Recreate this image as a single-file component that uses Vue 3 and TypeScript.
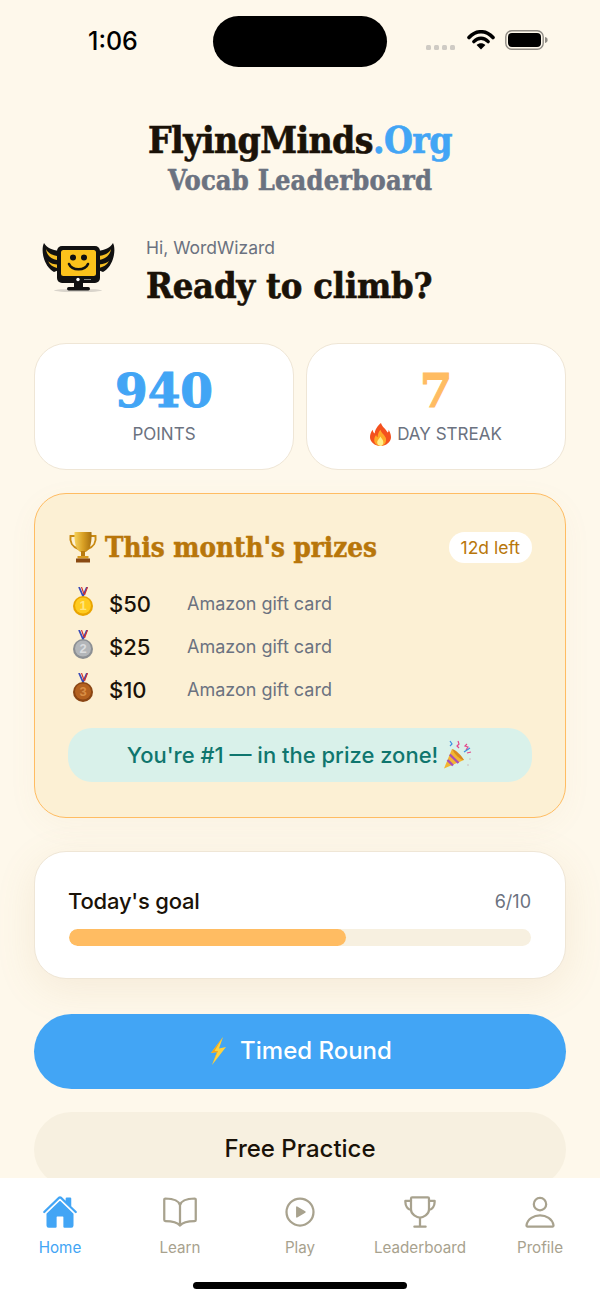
<script setup lang="ts">
interface Prize { amount: string; note: string; place: string; rim: string; face: string; ink: string }
const prizes: Prize[] = [
  { amount: '$50', note: 'Amazon gift card', place: '1', rim: '#E9A400', face: '#FFCB1F', ink: '#FFE681' },
  { amount: '$25', note: 'Amazon gift card', place: '2', rim: '#8C8F93', face: '#B3B6B9', ink: '#DADCDE' },
  { amount: '$10', note: 'Amazon gift card', place: '3', rim: '#8A4513', face: '#B4611F', ink: '#D98E45' }
]
const tabs = ['Home', 'Learn', 'Play', 'Leaderboard', 'Profile']
const goalDone = 6
const goalTotal = 10
const progress = `${(goalDone / goalTotal) * 100}%`
</script>

<template>
  <div class="phone">
    <header class="status">
      <span class="time">1:06</span>
      <span class="island"></span>
      <span class="status-right">
        <span class="dots"><i></i><i></i><i></i><i></i></span>
        <svg class="wifi" width="28" height="20" viewBox="0 0 28 20">
          <path d="M2 7.500C9-.2 19-.2 26 7.500" fill="none" stroke="#000" stroke-width="3.600" stroke-linecap="round" />
          <path d="M6.800 11.600c4.200-4.400 10.200-4.400 14.400 0" fill="none" stroke="#000" stroke-width="3.400" stroke-linecap="round" />
          <path d="M14 19.500l-4.400-4.600c2.500-2.300 6.300-2.300 8.800 0z" fill="#000" />
        </svg>
        <svg class="battery" width="43" height="20" viewBox="0 0 43 20">
          <rect x="0.800" y="0.800" width="37.400" height="18.400" rx="6" fill="none" stroke="#8f8b84" stroke-width="1.400" />
          <rect x="3" y="3" width="33" height="14" rx="4" fill="#000" />
          <path d="M40 7c2 .4 2.600 1.600 2.600 3s-.6 2.600-2.600 3z" fill="#8f8b84" />
        </svg>
      </span>
    </header>

    <main class="content">
      <section class="brand">
        <h1 class="brand-name">FlyingMinds<span class="accent">.Org</span></h1>
        <p class="brand-sub">Vocab Leaderboard</p>
      </section>

      <section class="greeting">
        <svg class="mascot" width="76" height="54" viewBox="10 10 76 54">
          <ellipse cx="48" cy="58.500" rx="24" ry="1.600" fill="#d9d4cb" />
          <path d="M14 11c-1.500 3-2 8-.5 14 1.500 6 5 12 10.500 15l5-2V19c-7-1-12-3-15-8z" fill="#111" />
          <path d="M83 11c1.500 3 2 8 .5 14-1.500 6-5 12-10.500 15l-5-2V19c7-1 12-3 15-8z" fill="#111" />
          <path d="M16 17c2 4 6 6 11 7v4c-6-1-10-4-11-11zM18 29c2 2 4 3 9 3.500v3.500c-4-1-7-3-9-7z" fill="#F5BE23" />
          <path d="M81 17c-2 4-6 6-12 7v4c6-1 11-4 12-11zM79 29c-2 2-5 3-10 3.500v3.500c4-1 8-3 10-7z" fill="#F5BE23" />
          <rect x="27" y="14" width="43" height="37" rx="5" fill="#111" />
          <rect x="31" y="18" width="35" height="26" rx="2.500" fill="#FBC21B" />
          <circle cx="43" cy="25.500" r="3" fill="#111" />
          <circle cx="54" cy="25.500" r="3" fill="#111" />
          <path d="M39 32c3 7 16 7 19 0" fill="none" stroke="#111" stroke-width="2.600" stroke-linecap="round" />
          <circle cx="48" cy="47.500" r="1.700" fill="#fff" />
          <path d="M54 47.500h7" stroke="#888" stroke-width="1" />
          <rect x="44" y="50" width="9" height="6" fill="#111" />
          <rect x="37" y="55" width="23" height="3.500" rx="1.700" fill="#111" />
        </svg>
        <div class="greeting-text">
          <p class="hi">Hi, WordWizard</p>
          <h2 class="ready">Ready to climb?</h2>
        </div>
      </section>

      <section class="stats">
        <div class="stat">
          <span class="stat-value blue">940</span>
          <span class="stat-label">POINTS</span>
        </div>
        <div class="stat">
          <span class="stat-value orange">7</span>
          <span class="stat-label">
            <svg width="21" height="23" viewBox="0 0 22 24">
              <path d="M11.500 0c1 4 5 6 7 10 1-1 1-2 1-3 2 3 2.500 6 2.500 8 0 5-5 9-11 9S0 20 0 15c0-3 1-6 3-8 0 2 .5 3 2 4C5 7 8 3 11.500 0z" fill="#F4511E" />
              <path d="M11 7c.5 3 4 5 5.500 8.500C18 20 15 24 11 24s-7-3-6.500-7c.2-2 1-3.500 2-4.500.2 1.500.8 2 1.500 2.500C8 12 9 9 11 7z" fill="#FFA726" />
              <path d="M11 14c.5 2 3 3 3 6 0 2.200-1.400 4-3 4s-3.500-1.500-3.500-3.800c0-2.700 2.500-3.700 3.500-6.200z" fill="#FFEE8A" />
            </svg>
            DAY STREAK
          </span>
        </div>
      </section>

      <section class="prizes">
        <div class="prize-head">
          <h3 class="prize-title">
            <svg width="30" height="32" viewBox="0 0 30 32">
              <defs>
                <linearGradient id="cup" x1="0" y1="0" x2="1" y2="0">
                  <stop offset="0" stop-color="#F6D25C" />
                  <stop offset="0.5" stop-color="#D9A024" />
                  <stop offset="1" stop-color="#A8700E" />
                </linearGradient>
              </defs>
              <path d="M7 5H2.500c-1 6 2 11 8 13M23 5h4.500c1 6-2 11-8 13" fill="none" stroke="#C98A12" stroke-width="2" />
              <path d="M6.500 1h17c.5 9-1 18-6 20h-5C7.500 19 6 10 6.500 1z" fill="url(#cup)" />
              <rect x="13" y="20" width="4" height="6" fill="#B87A10" />
              <rect x="9.500" y="25" width="11" height="2.500" fill="#D89A20" />
              <rect x="8" y="27.500" width="14" height="4" fill="#8A4A12" />
            </svg>
            This month's prizes
          </h3>
          <span class="pill">12d left</span>
        </div>

        <ul class="prize-list">
          <li v-for="p in prizes" :key="p.place" class="prize-row">
            <svg class="medal" width="24" height="30" viewBox="0 0 24 30">
              <path d="M8 0l4 9 4-9" fill="none" stroke="#3B4CB8" stroke-width="1.800" />
              <path d="M10.500 0l2.500 7M16.500 0l-3 8" fill="none" stroke="#D32F2F" stroke-width="1.100" />
              <circle cx="12" cy="19" r="10" :fill="p.rim" />
              <circle cx="12" cy="18.500" r="8" :fill="p.face" />
              <text x="12" y="23" text-anchor="middle" class="medal-num" :fill="p.ink">{{ p.place }}</text>
            </svg>
            <span class="amount">{{ p.amount }}</span>
            <span class="note">{{ p.note }}</span>
          </li>
        </ul>

        <div class="zone">
          <span>You're #1 — in the prize zone!</span>
          <svg width="30" height="30" viewBox="0 0 30 30">
            <path d="M9 9L1 28.500 21 20z" fill="#F2B632" />
            <path d="M6.800 14.500L15.500 23M4.500 20l5.500 5.500" stroke="#A94FB5" stroke-width="2.400" fill="none" />
            <path d="M9 9c4 1 10 7 12 11-3 .5-9-5-12-11z" fill="#D98A1F" />
            <path d="M15 1l1 3-2 2 2 2M24 4l-2 2 3 1-2 3M28 12l-4 1" stroke="#E5458A" stroke-width="1.200" fill="none" />
            <path d="M7 1l2 3-2 2M21 12l6-4" stroke="#3F8FE0" stroke-width="1.200" fill="none" />
            <circle cx="27" cy="19" r="1" fill="#cfcfcf" />
            <circle cx="25" cy="25" r="1" fill="#cfcfcf" />
          </svg>
        </div>
      </section>

      <section class="goal">
        <div class="goal-head">
          <span class="goal-title">Today's goal</span>
          <span class="goal-count">{{ goalDone }}/{{ goalTotal }}</span>
        </div>
        <div class="track"><div class="fill" :style="{ width: progress }"></div></div>
      </section>

      <button class="btn primary">
        <svg width="20" height="28" viewBox="0 0 20 28">
          <path d="M15 0L3 16l6-1L4 28 18 10l-7 1.500z" fill="#FFD23F" />
          <path d="M15 0L3 16l6-1L4 28l6-14H6.500z" fill="#F2A71B" />
        </svg>
        Timed Round
      </button>
      <button class="btn secondary">Free Practice</button>
    </main>

    <nav class="tabbar">
      <div class="tabs">
        <div v-for="t in tabs" :key="t" class="tab" :class="{ active: t === 'Home' }">
          <svg width="36" height="36" viewBox="0 0 512 512" class="tab-icon">
            <template v-if="t === 'Home'">
              <path d="M261.560 101.280a8 8 0 00-11.060 0L66.400 277.150a8 8 0 00-2.470 5.790L63.900 448a32 32 0 0032 32H192a16 16 0 0016-16V328a8 8 0 018-8h80a8 8 0 018 8v136a16 16 0 0016 16h96.060a32 32 0 0032-32V282.940a8 8 0 00-2.470-5.790z" fill="currentColor" />
              <path d="M490.910 244.150l-74.800-71.560V64a16 16 0 00-16-16h-48a16 16 0 00-16 16v32l-57.920-55.380C272.770 35.140 264.710 32 256 32c-8.680 0-16.720 3.140-22.140 8.630l-212.700 203.500c-6.220 6-7 15.870-1.340 22.370A16 16 0 0043 267.560L250.500 69.280a8 8 0 0111.060 0l207.520 198.280a16 16 0 0022.590-.44c6.140-6.360 5.630-16.860-.76-22.970z" fill="currentColor" />
            </template>
            <path v-else-if="t === 'Learn'" d="M256 160c16-63.160 76.430-95.410 208-96a15.940 15.940 0 0116 16v288a16 16 0 01-16 16c-128 0-177.450 25.810-208 64-30.370-38-80-64-208-64-9.880 0-16-8.050-16-17.930V80a15.940 15.940 0 0116-16c131.570.59 192 32.840 208 96zM256 160v288" class="line" />
            <template v-else-if="t === 'Play'">
              <circle cx="256" cy="256" r="192" class="line" />
              <path d="M216.320 334.440l114.450-69.140a10.890 10.890 0 000-18.600l-114.450-69.140a10.780 10.780 0 00-16.320 9.310v138.260a10.780 10.780 0 0016.320 9.310z" fill="currentColor" />
            </template>
            <template v-else-if="t === 'Leaderboard'">
              <path d="M176 464h160M256 464V336M384 224c0-50.640-.08-134.630-.12-160a16 16 0 00-16-16l-223.790.26a16 16 0 00-16 15.950c0 30.580-.13 129.170-.13 159.790 0 64.280 83 112 128 112S384 288.280 384 224z" class="line" />
              <path d="M128 96H48v16c0 55.220 33.550 112 80 112M384 96h80v16c0 55.220-33.550 112-80 112" class="line" />
            </template>
            <template v-else>
              <circle cx="256" cy="144" r="88" class="line" />
              <path d="M256 304c-87 0-175.300 48-191.640 138.600C62.390 453.520 68.570 464 80 464h352c11.440 0 17.620-10.480 15.650-21.400C431.300 352 343 304 256 304z" class="line" />
            </template>
          </svg>
          <span class="tab-label">{{ t }}</span>
        </div>
      </div>
      <div class="home-bar"></div>
    </nav>
  </div>
</template>

<style>
html, body { margin: 0; background: #FEF8EB; }
</style>

<style scoped>
* { box-sizing: border-box; }
.phone {
  position: relative;
  width: 600px;
  height: 1300px;
  overflow: hidden;
  background: #FEF8EB;
  color: #1A1208;
  font-family: Inter, "Liberation Sans", sans-serif;
}
.status {
  height: 67px;
  padding-top: 16px;
  display: flex;
  align-items: center;
  position: relative;
}
.time { position: absolute; left: 88px; top: 26px; font-size: 25px; line-height: 30px; font-weight: 500; color: #000; }
.island { display: block; width: 174px; height: 51px; margin-left: 213px; border-radius: 26px; background: #000; }
.status-right { display: flex; align-items: center; margin-left: 39px; padding-bottom: 3px; }
.dots { display: flex; gap: 3px; margin-top: 14px; }
.dots i { display: block; width: 5px; height: 5px; border-radius: 1.5px; background: #CFCBC4; }
.wifi { margin-left: 12px; }
.battery { margin-left: 10px; }

.content { display: flex; flex-direction: column; padding: 0 34px; }

.brand { margin-top: 50px; text-align: center; }
.brand-name {
  margin: 0;
  font: 700 37px/46px "DejaVu Serif Condensed", "DejaVu Serif", serif;
  letter-spacing: -0.6px;
  -webkit-text-stroke: 0.6px currentColor;
  color: #1A1208;
}
.accent { color: #42A5F5; }
.brand-sub {
  margin: 0;
  font: 700 27px/36px "DejaVu Serif Condensed", "DejaVu Serif", serif;
  letter-spacing: 0.2px;
  -webkit-text-stroke: 0.5px currentColor;
  color: #6B7280;
}

.greeting { display: flex; align-items: center; gap: 30px; margin-top: 37px; padding-left: 6px; }
.mascot { flex: none; margin-top: -6px; }
.hi { margin: 0; font-size: 17.5px; line-height: 24px; color: #6B7280; }
.ready {
  margin: 2px 0 0;
  font: 700 36px/46px "DejaVu Serif Condensed", "DejaVu Serif", serif;
  letter-spacing: -0.2px;
  -webkit-text-stroke: 0.6px currentColor;
  color: #1A1208;
}

.stats { display: grid; grid-template-columns: 1fr 1fr; gap: 12px; margin-top: 35px; }
.stat {
  height: 127px;
  padding-top: 18px;
  display: flex;
  flex-direction: column;
  align-items: center;
  background: #fff;
  border: 1.5px solid #EFE6D6;
  border-radius: 32px;
}
.stat-value {
  font: 700 47px/58px "DejaVu Serif", serif;
  -webkit-text-stroke: 1px currentColor;
}
.blue { color: #42A5F5; }
.orange { color: #FFBC62; }
.stat-label {
  display: flex;
  align-items: center;
  gap: 6px;
  margin-top: 1px;
  height: 26px;
  font-size: 17px;
  color: #6B7280;
}

.prizes {
  margin-top: 23px;
  height: 325px;
  padding: 37px 33px 0;
  background: #FCF0D4;
  border: 1.5px solid #FFBC62;
  border-radius: 32px;
  box-shadow: 0 8px 30px rgba(180, 140, 80, 0.05);
}
.prize-head { display: flex; align-items: center; justify-content: space-between; height: 32px; }
.prize-title {
  display: flex;
  align-items: center;
  gap: 7px;
  margin: 0;
  font: 700 27.5px/32px "DejaVu Serif Condensed", "DejaVu Serif", serif;
  -webkit-text-stroke: 0.5px currentColor;
  color: #B8760A;
}
.pill {
  display: flex;
  align-items: center;
  height: 31px;
  padding: 0 12px;
  border-radius: 16px;
  background: #fff;
  font-size: 17.5px;
  color: #B8760A;
}
.prize-list { list-style: none; margin: 19px 0 0; padding: 0; }
.prize-row { display: flex; align-items: center; height: 43px; }
.medal { flex: none; margin-left: 3px; margin-top: -4px; }
.medal-num { font: 700 13px "Liberation Sans", sans-serif; }
.amount { width: 78px; margin-left: 14px; font-size: 22px; font-weight: 500; color: #1A1208; }
.note { font-size: 18px; color: #6B7280; }
.zone {
  display: flex;
  align-items: center;
  justify-content: center;
  gap: 5px;
  height: 54px;
  margin-top: 17px;
  border-radius: 24px;
  background: #D9F1EA;
  font-size: 22px;
  font-weight: 500;
  color: #0F766E;
}

.goal {
  margin-top: 33px;
  height: 128px;
  padding: 33px 34px 0;
  background: #fff;
  border: 1.5px solid #EFE6D6;
  border-radius: 32px;
  box-shadow: 0 10px 40px rgba(180, 140, 80, 0.12);
}
.goal-head { display: flex; align-items: center; justify-content: space-between; height: 32px; }
.goal-title { margin-left: -1px; font-size: 22px; font-weight: 500; letter-spacing: -0.2px; }
.goal-count { font-size: 18px; color: #6B7280; }
.track { height: 17px; margin-top: 12px; border-radius: 9px; background: #F7F0E0; overflow: hidden; }
.fill { height: 100%; border-radius: 9px; background: #FFBC62; }

.btn {
  display: flex;
  align-items: center;
  justify-content: center;
  gap: 12px;
  width: 100%;
  height: 75px;
  padding: 0 0 2px;
  border: 0;
  border-radius: 38px;
  font-family: inherit;
  font-size: 24px;
  font-weight: 500;
}
.primary { margin-top: 35px; background: #42A5F5; color: #fff; }
.secondary { margin-top: 23px; background: #F7F0E0; color: #1A1208; }

.tabbar {
  position: absolute;
  left: 0;
  right: 0;
  bottom: 0;
  height: 122px;
  padding-top: 16px;
  background: #fff;
}
.tabs { display: grid; grid-template-columns: repeat(5, 1fr); }
.tab { display: flex; flex-direction: column; align-items: center; color: #A8A28E; }
.tab.active { color: #42A5F5; }
.line { fill: none; stroke: currentColor; stroke-width: 32; stroke-linecap: round; stroke-linejoin: round; }
.tab-icon { display: block; }
.tab-label { margin-top: 8px; font-size: 15.2px; line-height: 20px; }
.home-bar { width: 214px; height: 7px; margin: 24px auto 0; border-radius: 4px; background: #000; }
</style>
